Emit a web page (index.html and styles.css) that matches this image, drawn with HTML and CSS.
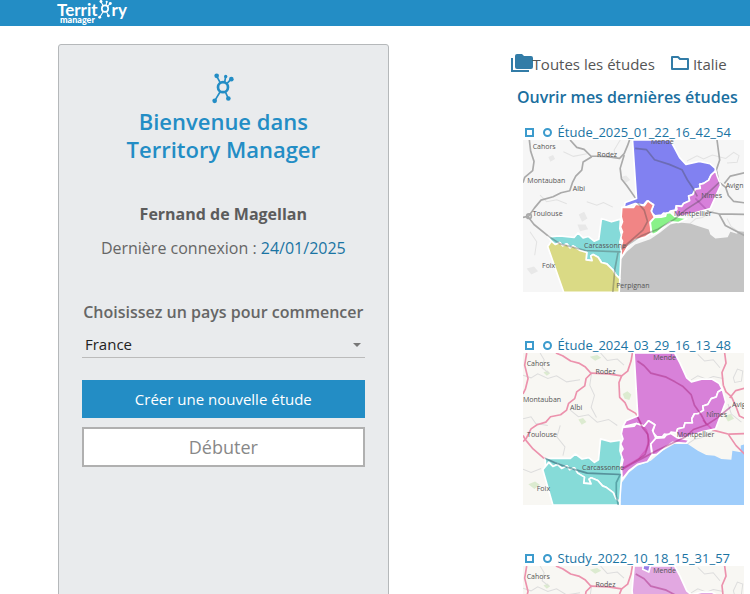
FILE: index.html
```html
<!DOCTYPE html>
<html lang="fr">
<head>
    <meta charset="UTF-8">
    <meta name="viewport" content="width=device-width, initial-scale=1.0">
    <title>Territory Manager</title>
    <link rel="stylesheet" href="styles.css">
</head>
<body>
    <!-- Formes communes -->
    <svg class="sprite" aria-hidden="true">
        <symbol id="node-logo" viewBox="0 0 66 92">
            <g fill="none" stroke="currentColor" stroke-width="5">
                <circle cx="33" cy="42" r="15" stroke-width="8"/>
                <path d="M25 29 14 9M38 27 41 10M44 32 57 18M25 55 8 83M40 56 49 76"/>
            </g>
            <g fill="currentColor">
                <circle cx="14" cy="8" r="7"/>
                <circle cx="41" cy="10" r="5"/>
                <circle cx="58" cy="18" r="7"/>
                <circle cx="8" cy="83" r="7"/>
                <circle cx="49" cy="76" r="7"/>
            </g>
        </symbol>

        <symbol id="map-base" viewBox="9 54 663 453">
            <rect x="9" y="54" width="663" height="453" fill="#f8f7f3"/>
            <g fill="#dcebd0">
                <path d="M306 176l14-8 12 10-6 16-14-4zM70 112l12-6 8 8-10 8zM174 252l14-4 10 12-14 8zM610 242l18-6 10 14-18 8zM25 445l20-8 14 10-16 12zM208 65l22-5 12 8-18 9z"/>
            </g>
            <g class="minor">
                <path d="M9 120l24 8 20-12 30 14 26-8 30 18 40-6M60 54l12 20-6 24 20 16M150 224l24 20 30-6 26 22 34-8 26 18M9 250l24-6 14 20 36 6M214 110l-6 40 14 30-10 36 16 30M510 134l20-12 26 10 20-8 30 6M636 128l12-26 16 6-4 30-20 4zM620 206l10 30 30 24M120 270l-10 34 24 30-6 26M9 400l24 10 30-12M240 54l20 22 30-4 20 18M530 58l20 20 26-4 20 24M500 325l20-14 20-4 40-22"/>
            </g>
            <path fill="#9fcdfb" d="M300 507V445L325 410 350 390 390 375 425 345 460 325 500 325 530 345 555 358 580 360 600 370 630 372 633 345 658 350 658 330 672 325V507z"/>
            <g class="roads">
                <path d="M20 54l-6 36 10 40-8 32-7 14M107 54l20 8 24 16 24 6 20 12 18 20M213 114l50 2 40 6 18-14 10-30 4-24"/>
                <path d="M213 114l-16 16-4 22-24 18-6 20-18 14-6 20-18 14-30 6-14 16-26 8-18 12-14 28-10 10"/>
                <path d="M303 122l-8 20 2 44 16 16 8 18 24 14 16 30 16 20 8 30-10 30-20 24-50 30"/>
                <path d="M9 300l10 16 20 24 30 26 34 14 50 18 46 14 98 4"/>
                <path d="M610 54l4 30-12 28 4 38 8 20 16 14 14 30 10 28 18 8M545 254l30 30 48 12 49-2M622 298l22 32 28 28M625 188l18-22 29-8"/>
            </g>
        </symbol>

        <symbol id="map-labels" viewBox="9 54 663 453">
            <g class="labels">
                <text x="20" y="93">Cahors</text>
                <text x="225" y="116">Rodez</text>
                <text x="397" y="76">Mende</text>
                <text x="9" y="201">Montauban</text>
                <text x="149" y="223">Albi</text>
                <text x="21" y="304">Toulouse</text>
                <text x="185" y="403">Carcassonne</text>
                <text x="50" y="466">Foix</text>
                <text x="555" y="246">Nîmes</text>
                <text x="467" y="305">Montpellier</text>
                <text x="632" y="215">Avig</text>
            </g>
        </symbol>
    </svg>

    <header class="topbar">
        <a class="brand" href="#" aria-label="Territory manager">
            <span class="brand-main">Territ<svg class="brand-node"><use href="#node-logo"/></svg>ry</span>
            <span class="brand-sub">manager</span>
        </a>
    </header>

    <main class="page">
        <section class="welcome">
            <svg class="welcome-logo" aria-hidden="true"><use href="#node-logo"/></svg>
            <h1>Bienvenue dans<br>Territory Manager</h1>
            <p class="user-name">Fernand de Magellan</p>
            <p class="last-login">Dernière connexion : <span>24/01/2025</span></p>

            <form class="start-form">
                <label for="country">Choisissez un pays pour commencer</label>
                <div class="select-wrap">
                    <select id="country">
                        <option>France</option>
                        <option>Italie</option>
                    </select>
                </div>
                <button type="button" class="btn btn-primary">Créer une nouvelle étude</button>
                <button type="button" class="btn btn-outline">Débuter</button>
            </form>
        </section>

        <section class="studies">
            <nav class="folders">
                <a href="#">
                    <svg class="folder-all" viewBox="0 0 22 20" aria-hidden="true">
                        <path fill="#327ca7" d="M6 0h5l2 2h7q2 0 2 2v9q0 2-2 2H6q-2 0-2-2V2q0-2 2-2z"/>
                        <path fill="none" stroke="#327ca7" stroke-width="2" d="M1 4v13h17"/>
                    </svg>Toutes les études</a>
                <a href="#">
                    <svg class="folder-one" viewBox="0 0 18 16" aria-hidden="true">
                        <path fill="none" stroke="#327ca7" stroke-width="2" stroke-linejoin="round" d="M1 1h6l2 2h8v10H1z"/>
                    </svg>Italie</a>
            </nav>
            <h2>Ouvrir mes dernières études</h2>

            <article class="study">
                <a class="study-title" href="#"><i class="mark-square"></i><i class="mark-round"></i>Étude_2025_01_22_16_42_54</a>
                <svg class="map" viewBox="9 15 663 456" preserveAspectRatio="xMinYMin slice" role="img" aria-label="Carte de l'étude">
                    <rect x="9" y="15" width="663" height="456" fill="#f6f6f6"/>
                    <path fill="#e8e8e8" d="M85 66l14-6 6 12-14 8zM176 238l16-8 10 20-16 10zM304 125l14-4 12 14-14 8zM20 400l22-6 12 14-20 10zM172 268l24 0 8 14-24 6z"/>
                    <g class="minor minor-gray">
                        <path d="M130 50l30 14 40-8M60 180l20 20 30-6 30 12M500 78l30-16 20 10 26-12 40 10 24-18 16 10-6 20-30 2M200 200l30 10 20-8 28 14M300 15l-18 30 4 24M620 250l12 24 28 20M30 290l20 30-6 40M510 265l16-14 20-4 34-20"/>
                    </g>
                    <path fill="#c4c4c4" d="M297 471L302 372 320 350 345 328 390 312 420 292 450 268 475 262 510 265 525 270 565 283 570 298 585 310 622 306 630 290 650 296 655 288 672 290V471z"/>
                    <g class="roads roads-gray">
                        <path d="M28 15l4 34 10 30-4 28-24 20-5 16M150 15l20 22 22 6 20 20 50 2 36 5 14-14 10-24 6-17M215 65l-26 16-4 24-18 18-10 20-8 24-26 6-24 12-36 10-20 24-17 24-17 4M22 242l20 26 42 34"/>
                        <path d="M312 60l-12 40 4 32 16 20 28 40M590 15l8 60-10 30 8 36 20 16 8 24 16 18 32 4M525 190l40 40 30 6 77 2M595 235l20 36 57 30M612 145l18-22 42-10"/>
                        <circle cx="27" cy="243" r="7"/>
                    </g>
                    <g class="zones">
                        <path fill="#4848ee" d="M337 15L450 15 463 39 479 69 497 88 537 79 569 86 585 100 585 110 572 120 565 135 550 145 538 148 540 160 525 162 518 178 505 183 508 197 490 205 484 214 468 212 465 225 450 228 444 236 430 234 424 240 405 242 392 232 400 208 380 198 370 210 345 205 312 217 315 202 349 190z"/>
                        <path fill="#c846cc" d="M586 107L590 122 601 150 570 220 500 240 470 245 462 232 470 222 468 212 484 214 490 205 508 197 505 183 518 178 525 162 540 160 538 148 550 145 565 135 572 120z"/>
                        <path fill="#ee4e4e" d="M305 217L340 217 347 207 372 212 383 197 400 210 393 227 403 247 390 260 393 293 375 306 345 314 325 330 303 368 303 335 307 318 300 305 307 290 301 275 307 260 303 245z"/>
                        <path fill="#54f054" d="M390 262L403 247 422 246 436 243 438 234 450 232 463 244 500 250 475 262 450 260 430 275 410 293 395 299z"/>
                        <path fill="#4dcccb" d="M84 305L119 302 162 307 174 293 189 308 205 304 222 318 236 312 244 250 274 260 301 252 299 280 304 300 299 320 303 345 299 430 288 420 279 405 260 386 244 382 234 366 219 358 212 362 216 376 198 374 200 352 180 346 159 332 150 338 140 326 128 332 119 322 106 328 94 318z"/>
                        <path fill="#cdcc4d" d="M83 334L94 318 106 328 119 322 128 332 140 326 150 338 159 332 180 346 200 352 198 374 216 376 212 362 219 358 234 366 244 382 260 386 279 405 288 420 299 430 297 471 131 471z"/>
                    </g>
                    <g class="roads roads-gray over">
                        <path d="M345 40l34 4 24 30 44 14 38 16 16 30 16 24 14 26M352 203l20 22 10 34-14 26-64 56M303 342l60-40 50-20 50-30 36-30 40-26 58-54M84 302l36 24 76 20 106 4M294 350l-10 52 -6 69"/>
                    </g>
                    <g class="labels">
                        <text x="38" y="43">Cahors</text>
                        <text x="231" y="65">Rodez</text>
                        <text x="392" y="26">Mende</text>
                        <text x="22" y="145">Montauban</text>
                        <text x="158" y="167">Albi</text>
                        <text x="38" y="244">Toulouse</text>
                        <text x="192" y="337">Carcassonne</text>
                        <text x="66" y="397">Foix</text>
                        <text x="543" y="189">Nîmes</text>
                        <text x="461" y="244">Montpellier</text>
                        <text x="616" y="159">Avign</text>
                        <text x="288" y="459">Perpignan</text>
                    </g>
                </svg>
            </article>

            <article class="study">
                <a class="study-title" href="#"><i class="mark-square"></i><i class="mark-round"></i>Étude_2024_03_29_16_13_48</a>
                <svg class="map" viewBox="9 54 663 453" preserveAspectRatio="xMinYMin slice" role="img" aria-label="Carte de l'étude">
                    <use href="#map-base" x="9" y="54" width="663" height="453"/>
                    <g class="zones">
                        <path fill="#c846cc" d="M340 54L461 54 477 84 497 128 511 140 541 132 573 132 593 144 603 162 590 170 585 185 570 190 560 207 545 212 547 225 530 235 520 235 512 250 514 262 492 262 488 276 470 280 466 292 450 290 444 298 430 296 424 304 408 304 395 290 402 268 383 256 370 272 346 264 306 274 316 256 351 242z"/>
                        <path fill="#c846cc" d="M306 276L340 272 347 264 370 272 383 256 402 268 395 285 405 308 390 325 393 358 380 378 350 386 325 405 303 432 303 390 307 372 298 355 307 340 300 325 307 310 302 295z"/>
                        <path fill="#c846cc" d="M390 325L405 308 430 306 436 298 450 294 468 306 505 314 495 323 455 320 430 338 408 356 395 358z"/>
                        <path fill="#c846cc" d="M603 162L613 200 583 280 545 288 500 304 474 308 466 292 470 280 488 276 492 262 514 262 512 250 520 235 530 235 547 225 545 212 560 207 570 190 585 185 590 170z"/>
                        <path fill="#4dcccb" d="M75 368L150 368 165 355 185 370 205 366 222 380 234 372 240 310 270 318 300 314 298 345 304 365 300 390 303 420 297 498 286 488 278 470 258 455 246 450 232 434 212 426 206 430 212 444 190 442 192 424 172 412 162 396 148 402 140 390 124 398 112 386 98 392 86 380 76 392z"/>
                        <path fill="#4dcccb" d="M68 402L76 392 86 380 98 392 112 386 124 398 140 390 148 402 162 396 172 412 192 424 190 442 212 444 206 430 212 426 232 434 246 450 258 455 278 470 286 488 297 498 297 507 98 507z"/>
                    </g>
                    <g class="roads roads-over">
                        <path d="M350 78l20 14 20 22 46 12 26 14 24 14 24 24 10 32 20 28 16 30M351 246l14 30 16 20 2 30-10 30-20 16-50 30M303 400l62-32 40-22 50-24 38-18 24-22 40-14 30-20 42-34"/>
                        <path class="slate" d="M75 368l30 14 46 16 50 14 98 4-12 24 0 40 6 27"/>
                    </g>
                    <use href="#map-labels" x="9" y="54" width="663" height="453"/>
                </svg>
            </article>

            <article class="study">
                <a class="study-title" href="#"><i class="mark-square"></i><i class="mark-round"></i>Study_2022_10_18_15_31_57</a>
                <svg class="map" viewBox="9 54 663 453" preserveAspectRatio="xMinYMin slice" role="img" aria-label="Carte de l'étude">
                    <use href="#map-base" x="9" y="54" width="663" height="453"/>
                    <g class="zones zones-light">
                        <path fill="#c846cc" d="M340 54h121l16 30 20 44 14 12 30-8 32 0 20 12 20 56-30 80-100 32-70 48-30 6-80 60V276l46-28-15-120z"/>
                        <path fill="#4848ee" d="M368 48h22l-6 24-18-8z"/>
                    </g>
                    <g class="roads roads-over">
                        <path d="M345 78l25 14 20 22 46 12 26 14 24 14 24 24"/>
                    </g>
                    <use href="#map-labels" x="9" y="54" width="663" height="453"/>
                </svg>
            </article>
        </section>
    </main>
</body>
</html>
```

FILE: styles.css
```css
* {
    box-sizing: border-box;
}
html {
    height: 100%;
    overflow: hidden;
}
body {
    margin: 0;
    height: 100%;
    overflow-y: auto;
    scrollbar-width: none;
    background-color: #fff;
    font-family: "Open Sans", "Noto Sans", sans-serif;
    color: #555;
}
h1, h2, p {
    margin: 0;
    font-weight: 600;
}
a {
    color: inherit;
    text-decoration: none;
}
.sprite {
    display: none;
}

/* Barre du haut */
.topbar {
    height: 26px;
    padding: 2px 0 0 57px;
    background-color: #238dc5;
}
.brand {
    display: flex;
    flex-direction: column;
    color: #fff;
    font-family: Lato, "Open Sans", sans-serif;
}
.brand-main {
    display: flex;
    align-items: center;
    height: 15px;
    font-size: 17px;
    font-weight: 700;
}
.brand-node {
    width: 14px;
    height: 21px;
}
.brand-sub {
    margin: -1px 0 0 3px;
    font-size: 9px;
    line-height: 7px;
    font-weight: 900;
}

.page {
    display: grid;
    grid-template-columns: 17fr 12fr;
    gap: 122px;
    padding: 18px 6px 0 58px;
}

/* Panneau d'accueil */
.welcome {
    display: flex;
    flex-direction: column;
    align-items: center;
    padding: 28px 23px;
    border: 1px solid #b5b8ba;
    border-radius: 3px;
    background-color: #e9ebed;
    text-align: center;
}
.welcome-logo {
    width: 22px;
    height: 31px;
    color: #238dc5;
}
.welcome h1 {
    margin-top: 3px;
    font-size: 22px;
    line-height: 28px;
    color: #238dc5;
}
.user-name {
    margin-top: 39px;
    font-size: 16px;
    line-height: 24px;
    font-weight: 700;
    color: #5c5c5c;
}
.last-login {
    margin-top: 10px;
    font-size: 16px;
    line-height: 24px;
    font-weight: 400;
    color: #666;
}
.last-login span {
    color: #1a74a3;
}
.start-form {
    display: flex;
    flex-direction: column;
    align-self: stretch;
    margin-top: 40px;
}
.start-form label {
    font-size: 16px;
    line-height: 24px;
    font-weight: 600;
    white-space: nowrap;
    color: #666;
}
.select-wrap {
    display: flex;
    align-items: center;
    margin-top: 8px;
    border-bottom: 1px solid #bbb;
}
.select-wrap::after {
    content: "";
    margin: 0 4px 0 -12px;
    border: 4px solid transparent;
    border-top-color: #777;
    border-bottom-width: 0;
    pointer-events: none;
}
select {
    flex: 1;
    height: 25px;
    padding: 0 3px 2px;
    border: 0;
    appearance: none;
    background: none;
    font: 15px "Open Sans", "Noto Sans", sans-serif;
    color: #222;
}
.btn {
    font-family: inherit;
    cursor: pointer;
}
.btn-primary {
    height: 38px;
    margin-top: 22px;
    border: 0;
    background-color: #238dc5;
    color: #fff;
    font-size: 15px;
}
.btn-outline {
    height: 40px;
    margin-top: 9px;
    border: 2px solid #b0b0b0;
    background-color: #fff;
    color: #888;
    font-size: 18px;
}

/* Dernières études */
.studies {
    min-width: 0;
    padding-top: 8px;
}
.folders {
    display: flex;
    gap: 16px;
    font-size: 15px;
    line-height: 24px;
    white-space: nowrap;
}
.folders a {
    display: flex;
    align-items: center;
}
.folder-all {
    width: 22px;
    height: 20px;
}
.folder-one {
    width: 18px;
    height: 16px;
    margin-right: 4px;
}
.studies h2 {
    margin-top: 9px;
    font-size: 16px;
    line-height: 24px;
    text-align: center;
    white-space: nowrap;
    color: #1a6f9f;
}
.study {
    margin: 15px 0 45px 12px;
}
.study + .study {
    margin-top: 0;
}
.study-title {
    display: flex;
    align-items: center;
    height: 16px;
    padding-left: 2px;
    font-size: 13px;
    white-space: nowrap;
    color: #1a74a3;
}
.mark-square,
.mark-round {
    width: 9px;
    height: 9px;
    border: 2px solid #3c9bcd;
}
.mark-square {
    margin-right: 9px;
}
.mark-round {
    margin-right: 6px;
    border-radius: 50%;
}

/* Cartes */
.map {
    display: block;
    width: 100%;
    height: 152px;
}
.minor {
    fill: none;
    stroke: #ddd;
    stroke-width: 3;
}
.minor-gray {
    stroke: #e2e2e2;
}
.roads {
    fill: none;
    stroke: #ec92ad;
    stroke-width: 5;
    stroke-linejoin: round;
}
.roads-gray {
    stroke: #aaa;
}
.roads-over {
    stroke: #aa2c83;
    opacity: .5;
}
.over {
    stroke: #444;
    opacity: .35;
}
.slate {
    stroke: #2b6f79;
}
.zones {
    stroke: #fff;
    stroke-width: 5;
    stroke-linejoin: round;
    fill-opacity: .67;
}
.zones-light {
    fill-opacity: .45;
}
.labels {
    fill: #555;
    font-size: 21px;
}
```
